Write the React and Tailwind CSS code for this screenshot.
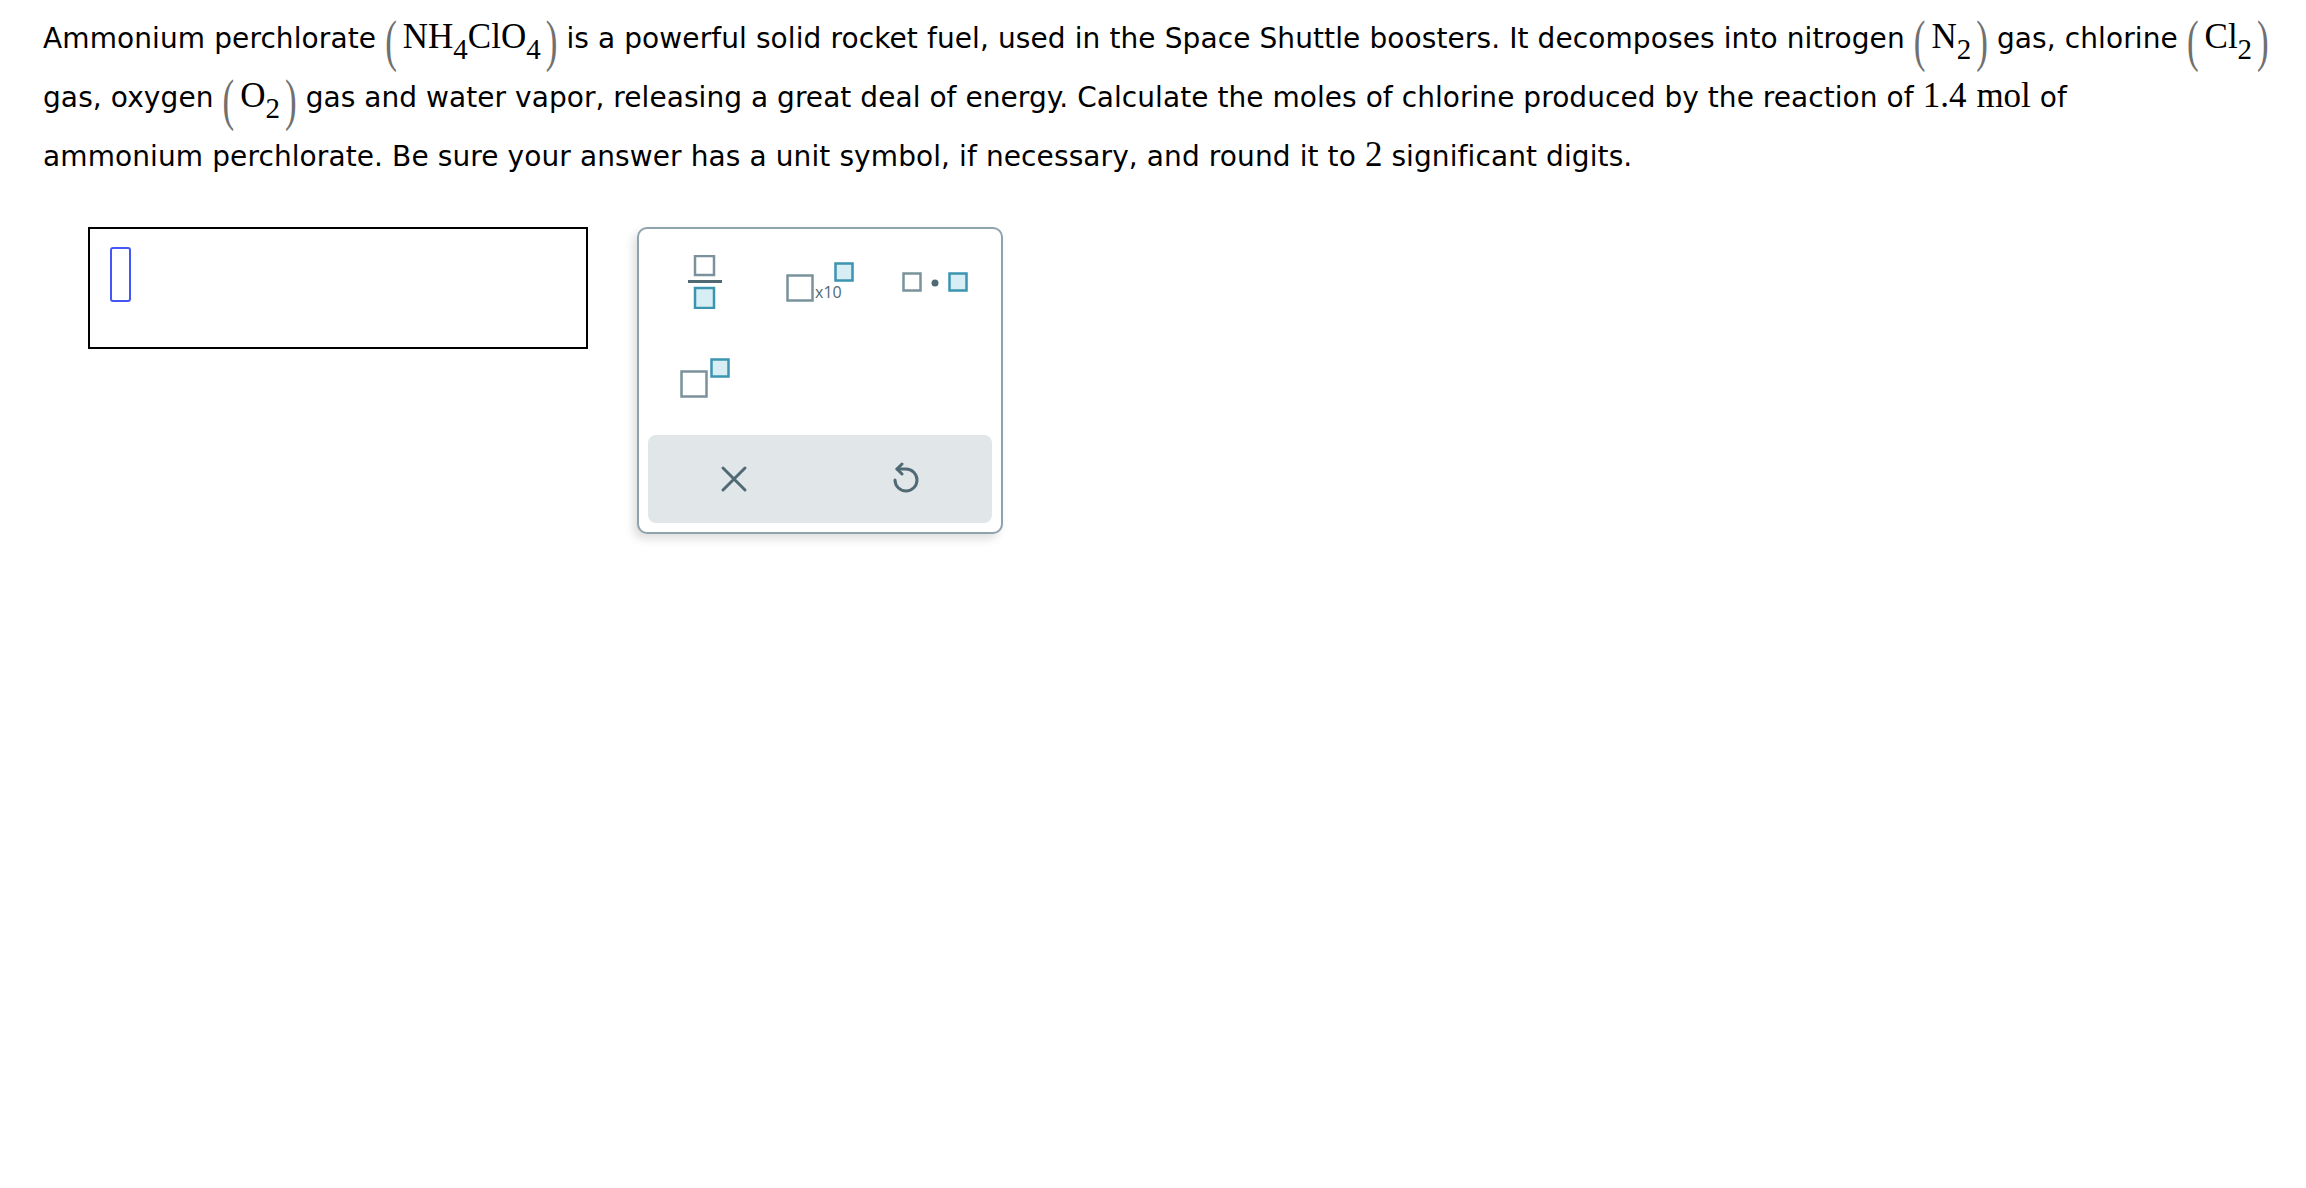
import React from "react";

const MATH = "font-['Liberation_Serif','Times_New_Roman',serif]";

function Paren({ close }) {
  return (
    <span
      className={`inline-block text-[35px] leading-none text-[#707070] scale-y-[1.6] translate-y-[5px] ${
        close ? "ml-[5px]" : "mr-[6px]"
      }`}
    >
      {close ? ")" : "("}
    </span>
  );
}

function Sub({ children }) {
  return <span className="text-[29px] align-[-11px]">{children}</span>;
}

function M({ children }) {
  return <span className={`${MATH} text-[35px] leading-none tracking-normal`}>{children}</span>;
}

function FractionIcon() {
  return (
    <svg width="34" height="54" viewBox="0 0 34 54">
      <rect x="7" y="1" width="19" height="19" fill="none" stroke="#7b929c" strokeWidth="2.5" />
      <rect x="0" y="25" width="34" height="3" fill="#4f6a75" />
      <rect x="7" y="33" width="19" height="20" fill="#d6eef4" stroke="#3b94b0" strokeWidth="2.5" />
    </svg>
  );
}

function X10Icon() {
  return (
    <svg width="68" height="40" viewBox="0 0 68 40">
      <rect x="1.5" y="13.5" width="25" height="25" fill="none" stroke="#7b929c" strokeWidth="2.5" />
      <text
        x="29"
        y="36"
        fontSize="16"
        fill="#4f6a75"
        fontFamily="'Open Sans', 'Lato', sans-serif"
      >
        x10
      </text>
      <rect x="49.5" y="1.5" width="17" height="17" fill="#d6eef4" stroke="#3b94b0" strokeWidth="2.5" />
    </svg>
  );
}

function DotIcon() {
  return (
    <svg width="66" height="20" viewBox="0 0 66 20">
      <rect x="1.5" y="1.5" width="17" height="17" fill="none" stroke="#7b929c" strokeWidth="2.5" />
      <circle cx="33" cy="11" r="3.5" fill="#4f6a75" />
      <rect x="47.5" y="1.5" width="17" height="17" fill="#d6eef4" stroke="#3b94b0" strokeWidth="2.5" />
    </svg>
  );
}

function SupIcon() {
  return (
    <svg width="51" height="40" viewBox="0 0 51 40">
      <rect x="1.5" y="13.5" width="25" height="25" fill="none" stroke="#7b929c" strokeWidth="2.5" />
      <rect x="31.5" y="1.5" width="17" height="17" fill="#d6eef4" stroke="#3b94b0" strokeWidth="2.5" />
    </svg>
  );
}

function CloseIcon() {
  return (
    <svg width="28" height="28" viewBox="0 0 28 28">
      <path d="M3 3 L25 25 M25 3 L3 25" stroke="#4f6a75" strokeWidth="3" strokeLinecap="round" fill="none" />
    </svg>
  );
}

function UndoIcon() {
  return (
    <svg width="30" height="34" viewBox="0 0 30 34">
      <path
        d="M6 7 H15 A11 11 0 1 1 4 18"
        stroke="#4f6a75"
        strokeWidth="3"
        strokeLinecap="round"
        strokeLinejoin="round"
        fill="none"
      />
      <path
        d="M11 2 L6 7 L11 12"
        stroke="#4f6a75"
        strokeWidth="3"
        strokeLinecap="round"
        strokeLinejoin="round"
        fill="none"
      />
    </svg>
  );
}

function Palette() {
  return (
    <div className="w-[366px] h-[307px] border-2 border-[#8fa3ad] rounded-[10px] bg-white shadow-[-4px_5px_10px_rgba(0,0,0,0.13)] px-[9px] pt-[5px] pb-[9px] flex flex-col">
      <div className="grid grid-cols-3 auto-rows-[96px]">
        <div className="flex items-center justify-center">
          <FractionIcon />
        </div>
        <div className="flex items-center justify-center">
          <X10Icon />
        </div>
        <div className="flex items-center justify-center">
          <DotIcon />
        </div>
        <div className="flex items-center justify-center">
          <SupIcon />
        </div>
      </div>
      <div className="mt-[9px] h-[88px] rounded-[8px] bg-[#e1e6e9] flex">
        <div className="flex-1 flex items-center justify-center">
          <CloseIcon />
        </div>
        <div className="flex-1 flex items-center justify-center">
          <UndoIcon />
        </div>
      </div>
    </div>
  );
}

export default function App() {
  return (
    <div className="min-h-screen bg-white">
      <div className="pl-[43px] pt-[9px] text-[28px] leading-[59px] tracking-[0.1px] text-black whitespace-nowrap font-['Verdana','DejaVu_Sans',sans-serif]">
        Ammonium perchlorate{" "}
        <M>
          <Paren />
          NH<Sub>4</Sub>ClO<Sub>4</Sub>
          <Paren close />
        </M>{" "}
        is a powerful solid rocket fuel, used in the Space Shuttle boosters. It decomposes into nitrogen{" "}
        <M>
          <Paren />
          N<Sub>2</Sub>
          <Paren close />
        </M>{" "}
        gas, chlorine{" "}
        <M>
          <Paren />
          Cl<Sub>2</Sub>
          <Paren close />
        </M>
        <br />
        gas, oxygen{" "}
        <M>
          <Paren />
          O<Sub>2</Sub>
          <Paren close />
        </M>{" "}
        <span className="tracking-[0.05px]">
          gas and water vapor, releasing a great deal of energy. Calculate the moles of chlorine produced by the reaction of
        </span>{" "}
        <M>
          <span>1.4</span>
          <span className="ml-[10px]">mol</span>
        </M>{" "}
        of
        <br />
        ammonium perchlorate. Be sure your answer has a unit symbol, if necessary, and round it to <M>2</M> significant digits.
      </div>

      <div className="mt-[41px] ml-[88px] flex items-start gap-[49px]">
        <div className="w-[500px] h-[122px] border-2 border-black pl-[20px] pt-[18px]">
          <div className="w-[21px] h-[55px] border-2 border-[#4457f5] rounded-[3px]" />
        </div>
        <Palette />
      </div>
    </div>
  );
}
